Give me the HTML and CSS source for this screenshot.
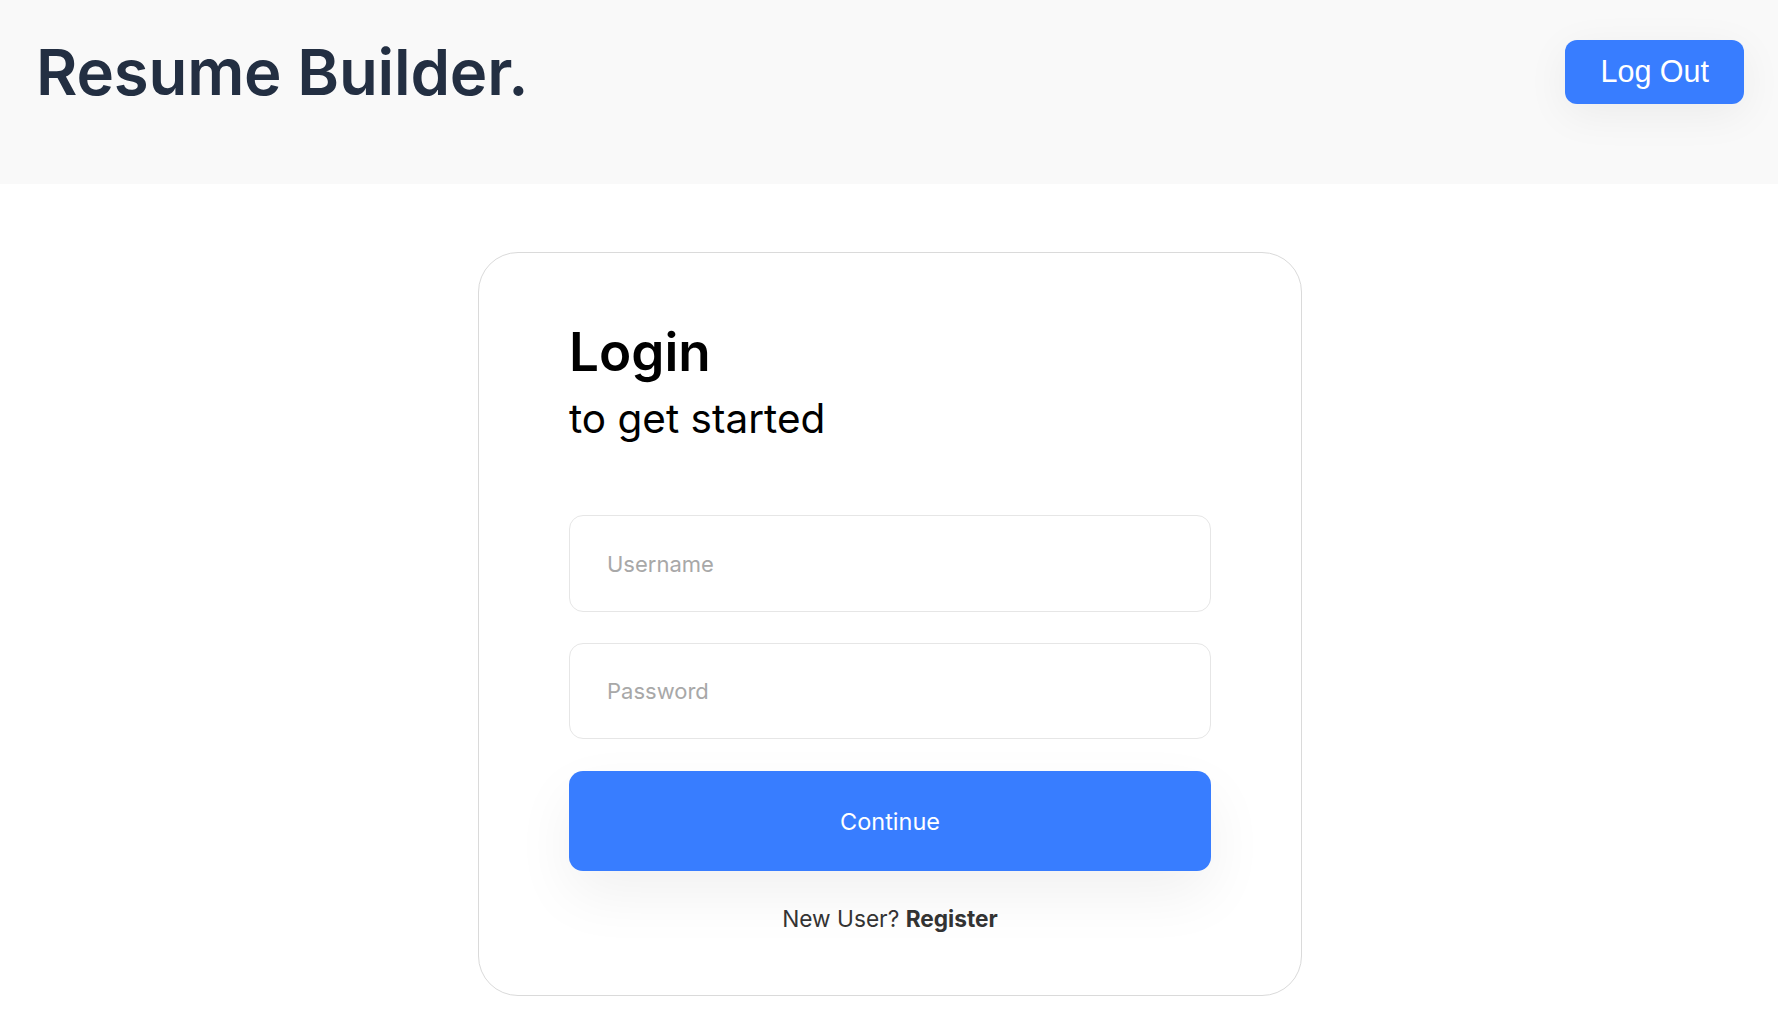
FILE: index.html
```html
<!DOCTYPE html>
<html lang="en">
<head>
<meta charset="utf-8">
<title>Resume Builder</title>
<link rel="stylesheet" href="styles.css">
</head>
<body>
  <header class="topbar">
    <h1 class="brand">Resume Builder.</h1>
    <button class="logout" type="button">Log Out</button>
  </header>
  <main class="main">
    <form class="card">
      <h2 class="card-title">Login</h2>
      <p class="card-sub">to get started</p>
      <div class="fields">
        <input class="field" type="text" placeholder="Username">
        <input class="field" type="password" placeholder="Password">
        <button class="continue" type="button">Continue</button>
      </div>
      <p class="register">New User? <a href="#" class="register-link">Register</a></p>
    </form>
  </main>
</body>
</html>
```

FILE: styles.css
```css
* { box-sizing: border-box; }

html, body {
  margin: 0;
  padding: 0;
  background: #ffffff;
  font-family: Inter, "Noto Sans", sans-serif;
}

.topbar {
  display: flex;
  align-items: center;
  justify-content: space-between;
  height: 184px;
  padding: 40px 34px 81px 36px;
  background: #f9f9f9;
}

.brand {
  margin: 0;
  font-size: 63.5px;
  line-height: 64px;
  font-weight: 600;
  color: #232f42;
  letter-spacing: -0.2px;
}

.logout {
  height: 64px;
  padding: 0 35px;
  border: none;
  border-radius: 12px;
  background: #387dff;
  color: #ffffff;
  font-family: "Liberation Sans", Arial, sans-serif;
  font-size: 30.5px;
  box-shadow: 0 10px 44px rgba(0, 0, 0, 0.06);
  cursor: pointer;
}

.main {
  display: flex;
  justify-content: center;
  padding-top: 68px;
  padding-left: 2px;
}

.card {
  width: 824px;
  border: 1px solid #dadada;
  border-radius: 40px;
  padding: 71px 90px 60px 90px;
  display: flex;
  flex-direction: column;
}

.card-title {
  margin: 0;
  font-size: 53px;
  line-height: 56px;
  font-weight: 600;
  color: #000000;
}

.card-sub {
  margin: 19px 0 0 0;
  font-size: 40.5px;
  line-height: 40px;
  font-weight: 400;
  color: #000000;
}

.fields {
  margin-top: 76px;
  display: flex;
  flex-direction: column;
}

.field {
  height: 97px;
  border: 1px solid #e6e6e6;
  border-radius: 14px;
  padding: 0 37px;
  font-family: Inter, "Noto Sans", sans-serif;
  font-size: 22px;
  color: #333;
  background: #fff;
  outline: none;
}

.field + .field {
  margin-top: 31px;
  height: 96px;
}

.field::placeholder {
  color: #a8a8a8;
}

.continue {
  margin-top: 32px;
  height: 100px;
  border: none;
  border-radius: 14px;
  background: #387dff;
  color: #ffffff;
  font-family: Inter, "Noto Sans", sans-serif;
  font-size: 23.5px;
  font-weight: 400;
  box-shadow: 0 24px 60px rgba(0, 0, 0, 0.06);
  cursor: pointer;
}

.register {
  margin: 31px 0 0 0;
  text-align: center;
  font-size: 22.7px;
  line-height: 33px;
  color: #333333;
}

.register-link {
  color: #333333;
  font-weight: 700;
  text-decoration: none;
}
```
